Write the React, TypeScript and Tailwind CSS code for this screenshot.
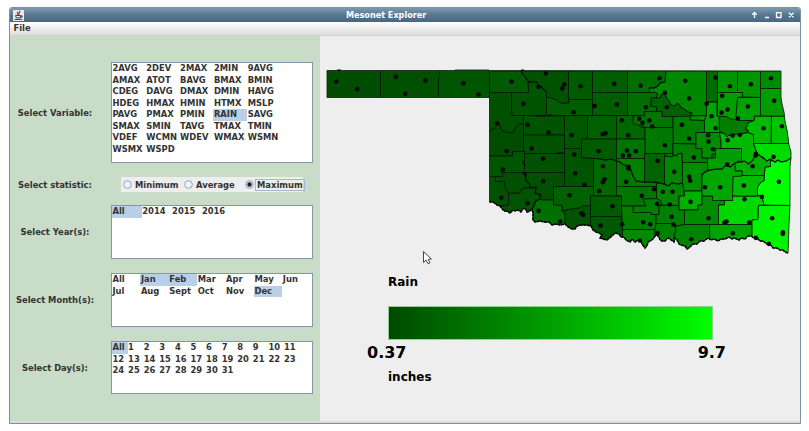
import React from "react";

type County = [fill: string, points: string];

const SOUTH =
  "788,253 785,252 783,250 780,250 777,248 773,248 770,244 767,244 763,241 760,241 757,238 754,238 751,236 748,236 745,239 741,238 739,240 734,238 732,239 729,237 725,239 721,239 718,241 714,239 711,240 708,238 704,241 700,241 697,244 693,244 690,247 687,249 685,246 681,245 679,244 677,240 675,238 674,242 670,239 668,238 665,241 662,241 660,240 659,237 657,235 655,236 653,239 650,241 648,242 647,246 645,248 642,244 641,241 638,240 635,242 632,239 630,242 626,240 624,237 621,237 619,234 615,233 612,236 607,240 603,239 600,238 602,235 599,233 596,232 593,230 591,226 586,225 581,225 577,226 575,229 572,229 568,227 565,224 560,225 556,224 552,225 549,222 544,222 540,221 535,222 533,220 533,213 532,209 530,211 527,212 525,208 523,209 521,212 518,210 515,211 513,210 510,213 507,211 504,211 500,206 497,205 493,202 489.5,202";

const STATE =
  "327,70.5 455,70.5 455,70 489,70 489,70.5 781,71 781,97 782,104 784,112 785,121 787,130 788,137 789,145 791,152 791,158 790,166 790,205 789,225 " +
  SOUTH +
  " 489.5,97.5 327,97.5";

const COUNTIES: County[] = [
  ["#004c00", "327,70 380.5,70 380.5,98 327,98"],
  ["#005000", "380.5,70 439.5,70 439.5,78 438.5,78 438.5,98 380.5,98"],
  ["#005600", "439.5,70 489.5,70 489.5,98 438.5,98 438.5,78 439.5,78"],
  ["#005b00", "489.5,71 521,71 523,75 525,77 528,81 528.5,92.5 489.5,92.5"],
  ["#005200", "521,71 568.5,71 568.5,103 563,103.5 559,102 557,100 553,99 551,97.5 546.5,97.5 546.5,92 543,89 541,86 538,85 537,82 530,82 528,81 525,77 523,75"],
  ["#005a00", "568.5,71 592.5,71 592.5,99.5 568.5,99.5"],
  ["#005400", "511.5,92.5 528.5,92.5 528.5,82 537,82 538,85 541,86 543,89 546.5,92 546.5,115.5 512.5,115.5 511.5,112"],
  ["#005e00", "546.5,97.5 551,97.5 553,99 557,100 559,102 563,103.5 569,103 569,99.5 592.5,99.5 592.5,115.5 546.5,115.5"],
  ["#005000", "489.5,92.5 511.5,92.5 511.5,112 512.5,115.5 523.5,115.5 523.5,124 519,124 516,127 514,131 511,133 507,132.5 503,131 501,129 500,125 497,123 495,129 492,129 489.5,132"],
  ["#004d00", "489.5,132 492,129 495,129 497,123 500,125 501,129 503,131 507,132.5 511,133 514,131 516,127 519,124 523.5,124 523.5,151.5 512.5,151.5 512.5,156 489.5,156"],
  ["#005300", "523.5,115.5 564.5,116 564.5,135 556,134 550,135.5 523.5,135"],
  ["#005100", "523.5,135 564.5,135 564.5,153.5 524.5,153.5 523.5,148"],
  ["#005700", "564.5,115.5 587.5,115.5 587.5,139 581.5,139 581.5,148.5 564.5,148.5"],
  ["#005f00", "587.5,115.5 616.5,115.5 616.5,139 587.5,139"],
  ["#005b00", "581.5,139 616.5,139 616.5,161 611,159 605,160 597,158.5 581.5,158"],
  ["#005400", "564.5,148.5 581.5,148.5 581.5,158 593.5,158.5 593.5,186.5 564.5,186.5"],
  ["#005100", "524.5,153.5 564.5,153.5 564.5,172.5 524.5,172.5"],
  ["#005500", "489.5,156 512.5,156 512.5,151.5 524.5,151.5 524.5,172.5 502.5,172.5 502.5,176.5 489.5,176.5"],
  ["#005200", "489.5,176.5 495.5,176.5 495.5,181.5 504.5,181.5 505,187 508.5,193 508.5,205 500,206 508.5,220 489.5,220"],
  ["#005000", "495.5,176.5 502.5,176.5 502.5,172.5 522,172.5 526,176 526,180 529,184 531,188 525,188 521,190 520,193 508.5,193.5 505,187 504.5,181.5 495.5,181.5"],
  ["#005400", "508.5,193.5 520,193 521,190 525,188 531,188 536,187 535,193 540,195 540,199 536,201 534,206 532,209 533,222 500,222 500,206 508.5,205"],
  ["#005000", "522,172.5 564.5,172.5 564.5,186.5 553.5,186.5 553.5,200 543,200 540,199 542,195 535,193 536,187 531,188 529,184 526,180 526,176"],
  ["#006100", "553.5,186.5 593.5,186.5 593.5,196 590.5,196 590.5,206 583,206 580,208 572,209 562,210.5 562,205.5 553.5,205"],
  ["#006f00", "532,209 534,206 534,202 540,199 543,200 553.5,200 553.5,205 562,205.5 562,211 565,213 565.5,230 530,230"],
  ["#005400", "562,211 572,209 580,208 583,206 590.5,206 590.5,235 565.5,235 565,213"],
  ["#005d00", "592.5,71 627.5,71 627.5,92.5 592.5,92.5"],
  ["#005e00", "592.5,92.5 627.5,92.5 627.5,115.5 592.5,115.5"],
  ["#006e00", "627.5,71 666,71 665,82 660,83 658,86 654,88 649,88 650,92.5 627.5,92.5"],
  ["#006d00", "627.5,92.5 650,92.5 655,92 658,94 656,98 651,98 651,106 656.5,107 656.5,111.5 644.5,111.5 644.5,115.5 627.5,115.5"],
  ["#008800", "666,71 706.5,71 706.5,115.5 690,116 692,113 688,112 684,109 681,108 679,104 676,104 675,106 671,105 669,101 666,97 665,93 661,95 660,98 656,98 658,94 655,92 650,92.5 649,88 654,88 658,86 660,83 665,82"],
  ["#006100", "651,98 656,98 660,98 661,95 665,93 666,97 669,101 671,105 675,106 676,104 679,104 681,108 684,109 688,112 692,113 690,116.5 662,116.5 662,111.5 656.5,111.5 656.5,107 651,106"],
  ["#007400", "633,116 644.5,115.5 644.5,111.5 662,111.5 662,116.5 673,116.5 673,127.5 645,127.5 640,125 637,126 633,124"],
  ["#006700", "616.5,115.5 633,115.5 633,124 637,124 640,127 645,127.5 645,139 616.5,139"],
  ["#009400", "690,116 706.5,115.5 704.5,120.5 690,120"],
  ["#007e00", "673,116.5 690,116 690,120 704.5,120.5 704.5,132.5 696,132.5 696,144 673,143.5"],
  ["#007800", "645,127.5 673,127.5 673,153.5 645,153.5"],
  ["#007400", "616.5,139 645,139 645,158.5 616.5,158.5"],
  ["#008200", "616.5,158.5 644.5,158.5 644.5,182 636,181 633,176 631,170 628,166 624,165 620,162 616.5,161"],
  ["#006800", "593.5,158.5 597,158.5 605,160 611,159 616.5,161 616.5,196 593.5,196"],
  ["#007800", "616.5,161 620,162 624,165 628,166 631,170 633,176 636,181 645,182 650,182 656.5,183 656.5,186.5 616.5,186.5"],
  ["#006500", "644.5,153.5 664.5,153.5 664.5,184 660,183 655,182 644.5,182"],
  ["#007800", "664.5,153.5 673,153.5 673,157 664.5,156"],
  ["#008600", "664.5,156 672,157 675,155 677,156 677,154 682,153 682.5,183 678,184 672,183 668,186 664.5,184"],
  ["#008000", "673,143.5 696,144 696,148.5 702,148.5 702,158 707.5,158 707.5,162.5 682.5,162.5 682,153 677,154 677,156 673,155"],
  ["#008e00", "682.5,162.5 707.5,162.5 707.5,170 702,174 702,191 682.5,191"],
  ["#007600", "616.5,186.5 656.5,186.5 656.5,199 643,199 646,206 621.5,206 621.5,196 616.5,196"],
  ["#008600", "656.5,183 664.5,184 668,186 672,183 678,184 682.5,183 684.5,196 679,196 679,205.5 661,205 660,200 656.5,199"],
  ["#007e00", "643,199 656.5,198.5 661,201 661,205 659,205 659,214.5 651,214.5 651,212.5 633,212.5 633,206 646,206"],
  ["#00b000", "679,196 684.5,196 684.5,191 702,191 702,205 698,205 698,210 679,210"],
  ["#005c00", "590.5,196 621.5,196 621.5,216.5 590.5,216.5"],
  ["#005800", "590.5,216.5 621.5,216.5 622.5,229 622.5,245 590.5,245"],
  ["#007f00", "621.5,206 633,206 633,212.5 651,212.5 651,214.5 656,214.5 656,229.5 622.5,229.5"],
  ["#008c00", "622.5,229.5 655,229.5 655,250 622.5,250"],
  ["#008000", "659,205.5 679,205.5 679,210 684.5,210 684.5,224.5 677,226 673,223.5 656,223.5 656,214.5 659,214.5"],
  ["#008200", "656,223.5 673,223.5 675,227 676,231 674,235 675,250 655,250 655,229"],
  ["#008400", "675,227 677,226 684.5,224.5 709.5,224.5 710,250 675,250 674,235 676,231"],
  ["#008c00", "684.5,210 698,210 698,205 702,205 702,196 712.5,196 712.5,200.5 724.5,200.5 724.5,205 718.5,205 718.5,224.5 684.5,224.5"],
  ["#00d800", "718.5,205 724.5,205 724.5,200.5 732.5,200.5 732.5,196 762,196 764,205 758.5,205.5 758,219.5 752,220 752,224.5 718.5,224.5"],
  ["#00a400", "709.5,224.5 752,224.5 752,245 710,245"],
  ["#00f400", "758.5,205.5 791,205.5 791,256 752,250 752,220 758,219.5"],
  ["#00ff00", "770.5,160 775,162 778,160 781,162 786,161 792,158 792,205.5 764,205 762,196 757.5,195 757.5,187 761,182 764,181 765,167 770.5,166.5"],
  ["#00bc00", "732.5,176.5 742,175.5 764,175.5 764,181 761,182 757.5,187 757.5,196 732.5,196"],
  ["#00b000", "735,163 739,161 742,162 745,161 748,164 753,160 754,157 758,154 763,158 770.5,160 770.5,166.5 765,167 764,175.5 742,175.5 742,171 735,171"],
  ["#00a600", "702,175 705,172 710,170 718,169 722,169 726,165 730,167 735,163 735,171 742,171 742,176 733,176.5 732.5,200.5 712.5,200.5 712.5,196 702,196"],
  ["#009e00", "707.5,158 715.5,158 715.5,148.5 741.5,148.5 741.5,162 735,163 730,167 726,165 722,169 718,169 707.5,170"],
  ["#008e00", "696,132.5 719.5,132.5 721,141 721,148.5 715.5,148.5 715.5,154 712,154 712,158 702,158 702,148.5 696,148.5"],
  ["#00b800", "719.5,133 724,133 727,137 729,135 732,136 736,134 740,135 744,133 748,132.5 753.5,134.5 753.5,144 757,153 753,160 748,164 745,161 741.5,161.5 741.5,148.5 721,148.5 721,141"],
  ["#00dc00", "753.5,143.5 790,143.5 792,158 786,161 781,162 778,160 775,162 770,159 767,161 763,157 758,155 755,157 757,153"],
  ["#00c400", "771.5,116 785,116 790,143.5 771,143.5"],
  ["#00bc00", "754.5,116 771.5,116 771,143.5 753.5,143.5 753.5,134.5 748,132.5 748,130 745,128 748,123 754,120.5"],
  ["#007e00", "719,116 727,116.5 730,119 735,118 738,120.5 750,120.5 747,124 748,126 745,128 748,132.5 744,133 740,135 736,134 732,136 729,135 727,137 724,133 719.5,131.5"],
  ["#00a400", "706.5,102 717,102 717,116 719,116 719.5,132.5 704.5,132.5 704.5,120 706.5,116"],
  ["#006c00", "706.5,71 717.5,71 717.5,101.5 706.5,102"],
  ["#009400", "717.5,71 737.5,71 737.5,92.5 717.5,92.5"],
  ["#009e00", "717.5,92.5 742.5,92.5 742.5,97 737.5,97.5 737,119.5 730,119 727,116.5 717.5,116"],
  ["#009600", "737.5,71 760.5,71 760.5,97.5 742.5,97 742.5,92.5 737.5,92.5"],
  ["#008c00", "760.5,71 782,71 782,88.5 760.5,88.5"],
  ["#009c00", "760.5,88.5 782,88.5 785,116 760.5,116"],
  ["#00a200", "737.5,97.5 760.5,97.5 760.5,116 754.5,116 754,120.5 738,120.5 736,116"],
];

// Station positions are stored in thirds of a pixel, relative to a tile origin.
const STATIONS: { x: number; y: number; at: number[][] }[] = [
  { x: 320, y: 60, at: [[48, 64], [111, 87], [227, 50], [255, 101], [316, 61], [430, 69], [475, 103]] },
  { x: 480, y: 60, at: [[94, 64], [197, 40], [175, 80], [252, 73], [246, 85], [301, 78], [130, 131], [280, 156], [51, 189], [142, 194], [205, 217], [274, 225], [154, 265], [79, 273], [189, 296], [282, 283]] },
  { x: 480, y: 150, at: [[68, 58], [189, 93], [285, 69], [313, 104], [268, 135], [63, 143], [142, 159], [175, 182], [240, 214], [304, 189], [309, 194]] },
  { x: 580, y: 60, at: [[102, 71], [181, 76], [238, 54], [315, 62], [43, 137], [110, 133], [197, 141], [254, 98], [260, 141], [327, 115], [125, 180], [177, 176], [187, 188], [207, 181], [216, 199], [305, 194], [68, 222], [76, 219], [144, 225], [254, 255], [327, 235], [55, 273], [140, 271], [167, 273], [128, 286], [147, 286], [232, 302], [68, 318], [145, 320], [145, 325]] },
  { x: 580, y: 150, at: [[138, 95], [73, 87], [68, 96], [57, 123], [97, 168], [61, 226], [185, 137], [222, 117], [248, 125], [277, 125], [230, 161], [268, 163], [274, 200], [280, 223], [189, 216], [210, 222], [126, 222], [232, 249], [179, 271], [282, 65], [327, 80]] },
  { x: 685, y: 60, at: [[90, 52], [134, 78], [197, 72], [257, 54], [64, 131], [111, 107], [188, 139], [267, 122], [127, 148], [109, 157], [79, 168], [158, 175], [91, 204], [235, 204], [290, 198], [69, 225], [142, 226], [164, 224], [70, 244], [127, 240], [83, 267], [26, 292], [212, 281], [211, 286], [265, 290], [202, 318], [126, 313]] },
  { x: 685, y: 150, at: [[15, 92], [59, 111], [105, 111], [176, 106], [281, 95], [178, 147], [230, 140], [16, 155], [70, 204], [118, 217], [124, 214], [192, 217], [261, 204], [143, 249], [293, 246], [293, 251], [18, 267], [212, 263], [251, 281]] },
];

function OklahomaMap() {
  return (
    <svg width="480" height="190" viewBox="320 66 480 190" className="block">
      <defs>
        <clipPath id="state">
          <polygon points={STATE} />
        </clipPath>
      </defs>
      <g clipPath="url(#state)" stroke="#001c00" strokeWidth="0.9" strokeLinejoin="round">
        <polygon points={STATE} fill="#007800" />
        {COUNTIES.map(([fill, points]) => (
          <polygon key={points} fill={fill} points={points} />
        ))}
      </g>
      <polygon points={STATE} fill="none" stroke="#283028" strokeWidth="0.9" strokeLinejoin="round" />
      <polyline points={SOUTH} fill="none" stroke="#000" strokeWidth="1.5" strokeDasharray="3 .7" />
      <path d="M337 70h4M521 70h3M536 116h9M548 115h4M571 135h3M557 153h6M523 161l2 5M522 172l5 3" stroke="#000" strokeWidth="1.2" fill="none" />
      <path
        d="M521 71l2 4 2 2 3 4 2 1h7l1 3 3 1 2 3 3 3M665 82l-5 1-2 3-4 2h-5M597 158.5L605 160 611 159 616.500 161 620 162 624 165 628 166 631 170 633 176 636 181 645 182 655 182 660 183 664.500 184 668 186 672 183 678 184 682 183M702 175L705 172 710 170 718 169 722 169 726 165 730 167 735 163 739 161 742 162 745 161 748 164 753 160 754 157 758 154 763 158 767 161 770 159 775 162 778 160 781 162 786 161 791 158M524 172L526 180 529 184 531 188 536 187 535 193 540 195 540 199 536 201 534 206 532 209"
        stroke="#001000"
        strokeWidth="1.2"
        strokeDasharray="2.500 .6"
        fill="none"
      />
      {STATIONS.flatMap((tile) =>
        tile.at.map(([dx, dy]) => (
          <circle
            key={`${tile.x}-${tile.y}-${dx}-${dy}`}
            cx={tile.x + dx / 3 + 0.2}
            cy={tile.y + dy / 3 + 0.2}
            r="2.3"
            fill="#000800"
          />
        )),
      )}
    </svg>
  );
}

function ListBox({ items, selected, grid, className }: { items: string[]; selected: string[]; grid: string; className: string }) {
  return (
    <div className={`w-[202px] border border-[#8296a8] bg-white ${className}`}>
      <div className={`grid auto-rows-[11.5px] content-start ${grid}`}>
        {items.map((item) => (
          <div
            key={item}
            className={`whitespace-nowrap pl-[0.5px] text-[8.4px] leading-[11px] ${selected.includes(item) ? "bg-[#b8cfe5]" : ""}`}
          >
            {item}
          </div>
        ))}
      </div>
    </div>
  );
}

function Row({ label, className, children }: { label: string; className: string; children: React.ReactNode }) {
  return (
    <div className={`flex items-center ${className}`}>
      <div className="w-[101px] shrink-0 pr-[11px] text-center text-[8.4px] leading-[12px] whitespace-nowrap">{label}</div>
      {children}
    </div>
  );
}

function Radio({ label, checked = false, className }: { label: string; checked?: boolean; className: string }) {
  return (
    <div className={`flex shrink-0 items-center ${className}`}>
      <svg width="9" height="9" viewBox="0 0 9 9" className="mr-[2px] shrink-0">
        <circle cx="4.500" cy="4.500" r="3.800" fill={checked ? "#dce8f2" : "#eef5fb"} stroke="#7890a8" strokeWidth=".8" />
        {checked && <circle cx="4.500" cy="4.500" r="2.200" fill="#222" />}
      </svg>
      <span className={`px-px text-[8.4px] leading-[10px] whitespace-nowrap ${checked ? "outline outline-[#a3b8cc]" : ""}`}>{label}</span>
    </div>
  );
}

const VARIABLES =
  "2AVG 2DEV 2MAX 2MIN 9AVG AMAX ATOT BAVG BMAX BMIN CDEG DAVG DMAX DMIN HAVG HDEG HMAX HMIN HTMX MSLP PAVG PMAX PMIN RAIN SAVG SMAX SMIN TAVG TMAX TMIN VDEF WCMN WDEV WMAX WSMN WSMX WSPD".split(" ");
const MONTHS = "All Jan Feb Mar Apr May Jun Jul Aug Sept Oct Nov Dec".split(" ");
const DAYS = ["All", ...Array.from({ length: 31 }, (_, i) => String(i + 1))];

export default function App() {
  return (
    <div className="h-[431px] w-[809px] overflow-hidden bg-white pt-[7px] pl-[9px] font-['DejaVu_Sans'] font-bold text-[#333]">
      <div className="flex h-[417px] w-[792px] flex-col overflow-hidden rounded-t-[3px] border border-[#7d90a2]">
        <div className="flex h-[14px] shrink-0 items-center bg-linear-to-b from-[#7c98ae] via-[#587891] to-[#486681] pr-[5px] pl-[3px] text-white">
          <svg width="11" height="11" viewBox="0 0 10 10">
            <rect width="10" height="10" fill="#e8e8e8" />
            <path d="M5.500 .8c2 1-1.500 2 0 3.800M4.300 1.800c-1 1 .4 1.700 0 2.600" stroke="#d02020" strokeWidth="1.100" fill="none" />
            <path d="M2.300 5h4.500v2.200H3zM7 5.300h1.300v1.200H7M1.500 8.600h7" stroke="#334860" strokeWidth=".9" fill="none" />
          </svg>
          <div className="flex-1 pl-[322px] text-[8.1px] leading-[12px] whitespace-nowrap">Mesonet Explorer</div>
          <svg width="44" height="10" viewBox="0 0 44 10" fill="none" stroke="#fff" strokeWidth="1.300">
            <path d="M3.500 8V2.500M1.300 4.700l2.200-2.200 2.200 2.200M14 7.500h4M25.500 2.700h4.500v4.800H25.500zM38 2.700l4.500 4.600M42.500 2.700L38 7.300" />
          </svg>
        </div>
        <div className="h-[14px] shrink-0 border-b border-[#d0d0d0] bg-linear-to-b from-white to-[#dddddd] pl-[3.5px] text-[8.4px] leading-[13px]">File</div>
        <div className="flex min-h-0 flex-1">
          <div className="w-[310px] shrink-0 bg-[#c8dcc8] pt-[26px]">
            <Row label="Select Variable:" className="h-[101px]">
              <ListBox items={VARIABLES} selected={["RAIN"]} grid="grid-cols-[repeat(5,33.8px)]" className="h-[101px]" />
            </Row>
            <Row label="Select statistic:" className="mt-[14px] h-[15px]">
              <div className="ml-[10px] flex h-[15px] w-[182px] items-center bg-[#eee] pl-[2px]">
                <Radio label="Minimum" className="w-[61px]" />
                <Radio label="Average" className="w-[61px]" />
                <Radio label="Maximum" checked className="w-[58px]" />
              </div>
            </Row>
            <Row label="Select Year(s):" className="mt-[13px] h-[54px]">
              <ListBox items={["All", "2014", "2015", "2016"]} selected={["All"]} grid="grid-cols-[repeat(4,29.8px)]" className="h-[54px]" />
            </Row>
            <Row label="Select Month(s):" className="mt-[14px] h-[54px]">
              <ListBox items={MONTHS} selected={["Jan", "Feb", "Dec"]} grid="grid-cols-[repeat(7,28.4px)]" className="h-[54px]" />
            </Row>
            <Row label="Select Day(s):" className="mt-[14px] h-[53px]">
              <ListBox items={DAYS} selected={["All"]} grid="grid-cols-[repeat(12,15.6px)]" className="h-[53px]" />
            </Row>
          </div>
          <div className="min-w-0 flex-1 bg-[#eee] pt-[30px] text-black">
            <OklahomaMap />
            <svg width="12" height="16" viewBox="0 0 12 16" className="-mt-[6px] ml-[102px] block">
              <path d="M1.500 1.500v11l2.600-2.400 2 3.700 1.900-1-1.800-3.500 3.200-.3z" fill="#fff" stroke="#333" strokeWidth=".9" />
            </svg>
            <div className="mt-[8px] pl-[68px] text-[12px] leading-[16px]">Rain</div>
            <div className="mt-[16px] ml-[68px] h-[34px] w-[325px] border border-[#8fd08f] bg-linear-to-r from-[#004a00] to-[#00ff00] bg-origin-border" />
            <div className="flex justify-between pt-[2px] pr-[74px] pl-[47px] text-[16px] leading-[22px]">
              <span>0.37</span>
              <span>9.7</span>
            </div>
            <div className="mt-[5px] pl-[68px] text-[12px] leading-[16px]">inches</div>
          </div>
        </div>
        <div className="h-[2px] shrink-0 bg-[#dcdcd6]" />
      </div>
    </div>
  );
}
